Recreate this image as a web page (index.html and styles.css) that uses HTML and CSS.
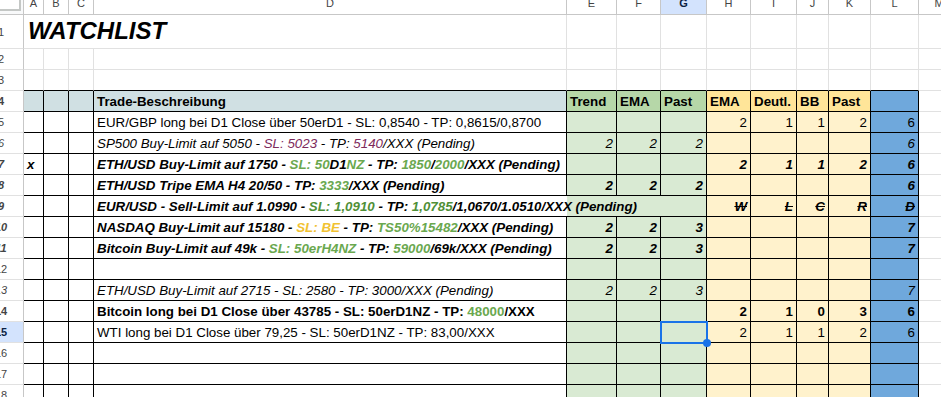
FILE: index.html
```html
<!DOCTYPE html>
<html lang="de">
<head>
    <meta charset="UTF-8">
    <title>Watchlist</title>
    <link rel="stylesheet" href="styles.css">
</head>
<body>
    <div class="sheet">
        <!-- column letters -->
        <div class="row hdr">
            <div class="corner"></div>
            <div class="ch">A</div><div class="ch">B</div><div class="ch">C</div><div class="ch">D</div>
            <div class="ch">E</div><div class="ch">F</div><div class="ch sel">G</div><div class="ch">H</div>
            <div class="ch">I</div><div class="ch">J</div><div class="ch">K</div><div class="ch">L</div>
            <div class="ch">M</div><div class="ch"></div>
        </div>

        <div class="row r1">
            <div class="rh"><span>1</span></div>
            <div class="c title">WATCHLIST</div>
            <div class="c"></div><div class="c"></div><div class="c"></div><div class="c"></div>
            <div class="c"></div><div class="c"></div><div class="c"></div><div class="c"></div>
            <div class="c"></div><div class="c"></div>
        </div>

        <div class="row">
            <div class="rh"><span>2</span></div>
            <div class="c"></div><div class="c"></div><div class="c"></div><div class="c"></div>
            <div class="c"></div><div class="c"></div><div class="c"></div><div class="c"></div>
            <div class="c"></div><div class="c"></div><div class="c"></div><div class="c"></div>
            <div class="c"></div><div class="c"></div>
        </div>

        <div class="row">
            <div class="rh"><span>3</span></div>
            <div class="c kb"></div><div class="c kb"></div><div class="c kb"></div><div class="c kb"></div>
            <div class="c kb"></div><div class="c kb"></div><div class="c kb"></div><div class="c kb"></div>
            <div class="c kb"></div><div class="c kb"></div><div class="c kb"></div><div class="c kb"></div>
            <div class="c"></div><div class="c"></div>
        </div>

        <div class="row bold">
            <div class="rh"><span>4</span></div>
            <div class="c k head"></div><div class="c k head"></div><div class="c k head"></div>
            <div class="c k head">Trade-Beschreibung</div>
            <div class="c k green-h">Trend</div><div class="c k green-h">EMA</div><div class="c k green-h">Past</div>
            <div class="c k yellow-h">EMA</div><div class="c k yellow-h">Deutl.</div><div class="c k yellow-h">BB</div><div class="c k yellow-h">Past</div>
            <div class="c k blue"></div>
            <div class="c"></div><div class="c"></div>
        </div>

        <div class="row">
            <div class="rh"><span>5</span></div>
            <div class="c k"></div><div class="c k"></div><div class="c k"></div>
            <div class="c k">EUR/GBP long bei D1 Close über 50erD1 - SL: 0,8540 - TP: 0,8615/0,8700</div>
            <div class="c k green"></div><div class="c k green"></div><div class="c k green"></div>
            <div class="c k yellow num">2</div><div class="c k yellow num">1</div><div class="c k yellow num">1</div><div class="c k yellow num">2</div>
            <div class="c k blue num">6</div>
            <div class="c"></div><div class="c"></div>
        </div>

        <div class="row it">
            <div class="rh"><span>6</span></div>
            <div class="c k"></div><div class="c k"></div><div class="c k"></div>
            <div class="c k">SP500 Buy-Limit auf 5050 - <span class="plum">SL: 5023</span> - TP: <span class="plum">5140</span>/XXX (Pending)</div>
            <div class="c k green num">2</div><div class="c k green num">2</div><div class="c k green num">2</div>
            <div class="c k yellow"></div><div class="c k yellow"></div><div class="c k yellow"></div><div class="c k yellow"></div>
            <div class="c k blue num">6</div>
            <div class="c"></div><div class="c"></div>
        </div>

        <div class="row bi">
            <div class="rh"><span>7</span></div>
            <div class="c k">x</div><div class="c k"></div><div class="c k"></div>
            <div class="c k">ETH/USD Buy-Limit auf 1750 - <span class="ok">SL: 50</span>D1<span class="ok">NZ</span> - TP: <span class="ok">1850</span>/<span class="ok">2000</span>/XXX (Pending)</div>
            <div class="c k green"></div><div class="c k green"></div><div class="c k green"></div>
            <div class="c k yellow num">2</div><div class="c k yellow num">1</div><div class="c k yellow num">1</div><div class="c k yellow num">2</div>
            <div class="c k blue num">6</div>
            <div class="c"></div><div class="c"></div>
        </div>

        <div class="row bi">
            <div class="rh"><span>8</span></div>
            <div class="c k"></div><div class="c k"></div><div class="c k"></div>
            <div class="c k">ETH/USD Tripe EMA H4 20/50 - TP: <span class="ok">3333</span>/XXX (Pending)</div>
            <div class="c k green num">2</div><div class="c k green num">2</div><div class="c k green num">2</div>
            <div class="c k yellow"></div><div class="c k yellow"></div><div class="c k yellow"></div><div class="c k yellow"></div>
            <div class="c k blue num">6</div>
            <div class="c"></div><div class="c"></div>
        </div>

        <div class="row bi">
            <div class="rh"><span>9</span></div>
            <div class="c k"></div><div class="c k"></div><div class="c k"></div>
            <div class="c k wide">EUR/USD - Sell-Limit auf 1.0990 - <span class="ok dark">SL: 1,0910</span> - TP: <span class="ok dark">1,0785</span>/1,0670/1.0510/XXX (Pending)</div>
            <div class="c k yellow num strike">W</div><div class="c k yellow num strike">L</div><div class="c k yellow num strike">C</div><div class="c k yellow num strike">R</div>
            <div class="c k blue num strike">D</div>
            <div class="c"></div><div class="c"></div>
        </div>

        <div class="row bi">
            <div class="rh"><span>10</span></div>
            <div class="c k"></div><div class="c k"></div><div class="c k"></div>
            <div class="c k">NASDAQ Buy-Limit auf 15180 - <span class="warn">SL: BE</span> - TP: <span class="ok">TS50%15482</span>/XXX (Pending)</div>
            <div class="c k green num">2</div><div class="c k green num">2</div><div class="c k green num">3</div>
            <div class="c k yellow"></div><div class="c k yellow"></div><div class="c k yellow"></div><div class="c k yellow"></div>
            <div class="c k blue num">7</div>
            <div class="c"></div><div class="c"></div>
        </div>

        <div class="row bi">
            <div class="rh"><span>11</span></div>
            <div class="c k"></div><div class="c k"></div><div class="c k"></div>
            <div class="c k">Bitcoin Buy-Limit auf 49k - <span class="ok">SL: 50erH4NZ</span> - TP: <span class="ok">59000</span>/69k/XXX (Pending)</div>
            <div class="c k green num">2</div><div class="c k green num">2</div><div class="c k green num">3</div>
            <div class="c k yellow"></div><div class="c k yellow"></div><div class="c k yellow"></div><div class="c k yellow"></div>
            <div class="c k blue num">7</div>
            <div class="c"></div><div class="c"></div>
        </div>

        <div class="row">
            <div class="rh"><span>12</span></div>
            <div class="c k"></div><div class="c k"></div><div class="c k"></div><div class="c k"></div>
            <div class="c k green"></div><div class="c k green"></div><div class="c k green"></div>
            <div class="c k yellow"></div><div class="c k yellow"></div><div class="c k yellow"></div><div class="c k yellow"></div>
            <div class="c k blue"></div>
            <div class="c"></div><div class="c"></div>
        </div>

        <div class="row it">
            <div class="rh"><span>13</span></div>
            <div class="c k"></div><div class="c k"></div><div class="c k"></div>
            <div class="c k">ETH/USD Buy-Limit auf 2715 - SL: 2580 - TP: 3000/XXX (Pending)</div>
            <div class="c k green num">2</div><div class="c k green num">2</div><div class="c k green num">3</div>
            <div class="c k yellow"></div><div class="c k yellow"></div><div class="c k yellow"></div><div class="c k yellow"></div>
            <div class="c k blue num">7</div>
            <div class="c"></div><div class="c"></div>
        </div>

        <div class="row bold">
            <div class="rh"><span>14</span></div>
            <div class="c k"></div><div class="c k"></div><div class="c k"></div>
            <div class="c k">Bitcoin long bei D1 Close über 43785 - SL: 50erD1NZ - TP: <span class="ok">48000</span>/XXX</div>
            <div class="c k green"></div><div class="c k green"></div><div class="c k green"></div>
            <div class="c k yellow num">2</div><div class="c k yellow num">1</div><div class="c k yellow num">0</div><div class="c k yellow num">3</div>
            <div class="c k blue num">6</div>
            <div class="c"></div><div class="c"></div>
        </div>

        <div class="row">
            <div class="rh active"><span>15</span></div>
            <div class="c k"></div><div class="c k"></div><div class="c k"></div>
            <div class="c k">WTI long bei D1 Close über 79,25 - SL: 50erD1NZ - TP: 83,00/XXX</div>
            <div class="c k green"></div><div class="c k green"></div>
            <div class="c k green cursor"><i class="cursor-box"></i><i class="cursor-handle"></i></div>
            <div class="c k yellow num">2</div><div class="c k yellow num">1</div><div class="c k yellow num">1</div><div class="c k yellow num">2</div>
            <div class="c k blue num">6</div>
            <div class="c"></div><div class="c"></div>
        </div>

        <div class="row">
            <div class="rh"><span>16</span></div>
            <div class="c k"></div><div class="c k"></div><div class="c k"></div><div class="c k"></div>
            <div class="c k green"></div><div class="c k green"></div><div class="c k green"></div>
            <div class="c k yellow"></div><div class="c k yellow"></div><div class="c k yellow"></div><div class="c k yellow"></div>
            <div class="c k blue"></div>
            <div class="c"></div><div class="c"></div>
        </div>

        <div class="row">
            <div class="rh"><span>17</span></div>
            <div class="c k"></div><div class="c k"></div><div class="c k"></div><div class="c k"></div>
            <div class="c k green"></div><div class="c k green"></div><div class="c k green"></div>
            <div class="c k yellow"></div><div class="c k yellow"></div><div class="c k yellow"></div><div class="c k yellow"></div>
            <div class="c k blue"></div>
            <div class="c"></div><div class="c"></div>
        </div>

        <div class="row">
            <div class="rh"><span>18</span></div>
            <div class="c k"></div><div class="c k"></div><div class="c k"></div><div class="c k"></div>
            <div class="c k green"></div><div class="c k green"></div><div class="c k green"></div>
            <div class="c k yellow"></div><div class="c k yellow"></div><div class="c k yellow"></div><div class="c k yellow"></div>
            <div class="c k blue"></div>
            <div class="c"></div><div class="c"></div>
        </div>
    </div>
</body>
</html>
```

FILE: styles.css
```css
* {
    margin: 0;
    padding: 0;
    box-sizing: border-box;
}

body {
    width: 941px;
    height: 397px;
    overflow: hidden;
    background: #fff;
    font-family: 'Liberation Sans', Arial, sans-serif;
    font-size: 10pt;
    color: #000;
}

.sheet {
    width: 1060px;
}

/* row header + columns A..N */
.row {
    display: grid;
    grid-template-columns: 24px 20px 25px 25px 473px 50px 44px 46px 44px 46px 32px 42px 48px 41px 100px;
    height: 21px;
}

.row.hdr { height: 15px; }
.row.r1 { height: 34px; }

.it { font-style: italic; }
.bold { font-weight: bold; }
.bi { font-style: italic; font-weight: bold; }

/* column letters */
.corner {
    background: #f8f9fa;
    border-right: 1px solid #c7c7c7;
    border-bottom: 1px solid #c7c7c7;
    position: relative;
}

.corner::after {
    content: '';
    position: absolute;
    left: 0;
    top: 0;
    width: 19px;
    height: 9px;
    background: #fff;
    border-right: 2px solid #c4c7c5;
    border-bottom: 2px solid #c4c7c5;
}

.ch {
    display: flex;
    justify-content: center;
    align-items: flex-end;
    overflow: hidden;
    padding-bottom: 5px;
    line-height: 12px;
    font-size: 11px;
    color: #444;
    background: #fff;
    border-right: 1px solid #c7c7c7;
    border-bottom: 1px solid #c7c7c7;
}

.ch.sel {
    background: #d3e3fd;
    color: #0b1f44;
    font-weight: bold;
}

/* row numbers, header is cut at the left edge */
.rh {
    display: flex;
    align-items: center;
    overflow: hidden;
    font-size: 11px;
    color: #444;
    background: #fff;
    border-right: 1px solid #c7c7c7;
    border-bottom: 1px solid #e1e1e1;
}

.rh span {
    flex: none;
    width: 46px;
    margin-left: -22px;
    text-align: center;
}

.rh.active {
    background: #d3e3fd;
    color: #0b1f44;
    font-weight: bold;
}

/* cells: text sits at the bottom like in the sheet */
.c {
    min-width: 0;
    padding: 3px 3px 2px;
    line-height: 15px;
    white-space: nowrap;
    border-right: 1px solid #e1e1e1;
    border-bottom: 1px solid #e1e1e1;
}

.c.k {
    border-right-color: #000;
    border-bottom-color: #000;
}

.c.kb { border-bottom-color: #000; }

.num { text-align: right; }

.title {
    grid-column: span 4;
    padding: 2px 3px 3px 4px;
    font-size: 24px;
    line-height: 28px;
    font-weight: bold;
    font-style: italic;
}

.wide {
    grid-column: span 4;
    background: linear-gradient(to right, #fff 473px, #d9ead3 473px);
}

.head { background: #d0e0e3; }
.green-h { background: #b6d7a8; }
.green { background: #d9ead3; }
.yellow-h { background: #ffe599; }
.yellow { background: #fff2cc; }
.blue { background: #6fa8dc; }

.strike { text-decoration: line-through; }

.ok { color: #6aa84f; }
.ok.dark { color: #4f8f37; }
.warn { color: #f1c232; }
.plum { color: #7e2a5c; }

/* selected cell G15 */
.cursor { position: relative; }

.cursor-box {
    position: absolute;
    top: -1px;
    left: -1px;
    right: -2px;
    bottom: -2px;
    border: 2px solid #1a73e8;
    z-index: 2;
}

.cursor-handle {
    position: absolute;
    right: -5px;
    bottom: -5px;
    width: 8px;
    height: 8px;
    border-radius: 50%;
    background: #1a73e8;
    z-index: 3;
}
```
